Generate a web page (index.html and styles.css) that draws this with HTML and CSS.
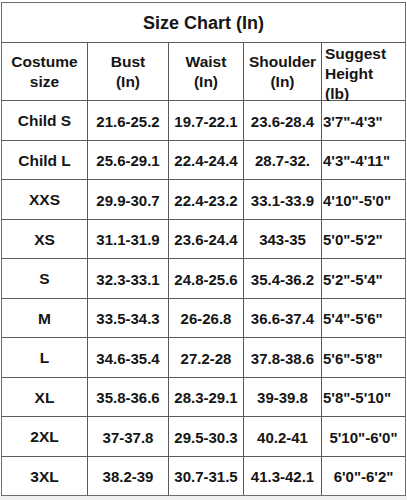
FILE: index.html
```html
<!DOCTYPE html>
<html lang="en">
<head>
<meta charset="utf-8">
<title>Size Chart</title>
<link rel="stylesheet" href="styles.css">
</head>
<body>
<div class="page">
  <div class="chart">
    <div class="title">Size Chart (In)</div>
    <div class="grid">
      <div class="cell head">Costume<br>size</div>
      <div class="cell head">Bust<br>(In)</div>
      <div class="cell head">Waist<br>(In)</div>
      <div class="cell head">Shoulder<br>(In)</div>
      <div class="cell head left-top">Suggest<br>Height<br>(lb)</div>

      <div class="cell size">Child S</div>
      <div class="cell">21.6-25.2</div>
      <div class="cell">19.7-22.1</div>
      <div class="cell">23.6-28.4</div>
      <div class="cell height">3'7"-4'3"</div>

      <div class="cell size">Child L</div>
      <div class="cell">25.6-29.1</div>
      <div class="cell">22.4-24.4</div>
      <div class="cell">28.7-32.</div>
      <div class="cell height">4'3"-4'11"</div>

      <div class="cell size">XXS</div>
      <div class="cell">29.9-30.7</div>
      <div class="cell">22.4-23.2</div>
      <div class="cell">33.1-33.9</div>
      <div class="cell height">4'10"-5'0"</div>

      <div class="cell size">XS</div>
      <div class="cell">31.1-31.9</div>
      <div class="cell">23.6-24.4</div>
      <div class="cell">343-35</div>
      <div class="cell height">5'0"-5'2"</div>

      <div class="cell size">S</div>
      <div class="cell">32.3-33.1</div>
      <div class="cell">24.8-25.6</div>
      <div class="cell">35.4-36.2</div>
      <div class="cell height">5'2"-5'4"</div>

      <div class="cell size">M</div>
      <div class="cell">33.5-34.3</div>
      <div class="cell">26-26.8</div>
      <div class="cell">36.6-37.4</div>
      <div class="cell height">5'4"-5'6"</div>

      <div class="cell size">L</div>
      <div class="cell">34.6-35.4</div>
      <div class="cell">27.2-28</div>
      <div class="cell">37.8-38.6</div>
      <div class="cell height">5'6"-5'8"</div>

      <div class="cell size">XL</div>
      <div class="cell">35.8-36.6</div>
      <div class="cell">28.3-29.1</div>
      <div class="cell">39-39.8</div>
      <div class="cell height">5'8"-5'10"</div>

      <div class="cell size">2XL</div>
      <div class="cell">37-37.8</div>
      <div class="cell">29.5-30.3</div>
      <div class="cell">40.2-41</div>
      <div class="cell height centered">5'10"-6'0"</div>

      <div class="cell size">3XL</div>
      <div class="cell">38.2-39</div>
      <div class="cell">30.7-31.5</div>
      <div class="cell">41.3-42.1</div>
      <div class="cell height centered">6'0"-6'2"</div>
    </div>
  </div>
</div>
</body>
</html>
```

FILE: styles.css
```css
html {
  background: #efefef;
}

body {
  margin: 0;
  font-family: "Liberation Sans", Arial, sans-serif;
  font-weight: bold;
  color: #151515;
}

.page {
  background: #ffffff;
  width: 407px;
  height: 496px;
  padding: 2px 0 0 1px;
  box-sizing: border-box;
}

.chart {
  width: 405px;
  height: 494px;
  border: 1px solid #6e6e6e;
  box-sizing: border-box;
  display: flex;
  flex-direction: column;
}

.title {
  height: 40px;
  flex: none;
  border-bottom: 1px solid #5a5a5a;
  box-sizing: border-box;
  display: flex;
  align-items: center;
  justify-content: center;
  font-size: 18px;
  padding-top: 1px;
}

.grid {
  flex: 1;
  display: grid;
  grid-template-columns: 85px 80px 74px 77px 83px;
  grid-template-rows: 57px repeat(10, 1fr);
  gap: 1px;
  background: #5a5a5a;
}

.cell {
  background: #ffffff;
  display: flex;
  align-items: center;
  justify-content: center;
  text-align: center;
  font-size: 15px;
  white-space: nowrap;
  padding-top: 2px;
  box-sizing: border-box;
}

.head {
  font-size: 15.5px;
  line-height: 20px;
  padding-top: 0;
}

.size {
  font-size: 15.5px;
}

.left-top {
  align-items: flex-start;
  justify-content: flex-start;
  text-align: left;
  padding: 1px 0 0 3px;
}

.height {
  justify-content: flex-start;
  padding-left: 1px;
}

.height.centered {
  justify-content: center;
  padding-left: 0;
}
```
